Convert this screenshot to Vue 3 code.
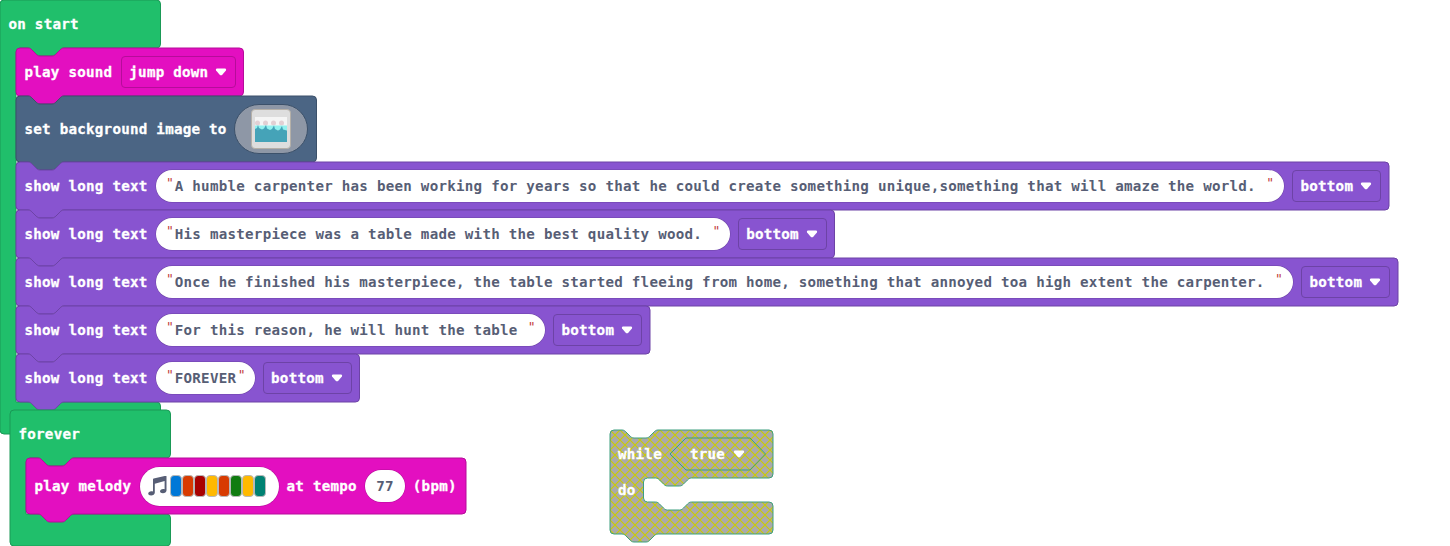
<script setup>
const NOTCH = 'c2 0 3 1 4 2l4 4c1 1 2 2 4 2h12c2 0 3 -1 4 -2l4 -4c1 -1 2 -2 4 -2'
const TAB = 'c-2 0 -3 1 -4 2l-4 4c-1 1 -2 2 -4 2h-12c-2 0 -3 -1 -4 -2l-4 -4c-1 -1 -2 -2 -4 -2'

const statementPath = (w, h) =>
  `M0 4a4 4 0 0 1 4 -4h8${NOTCH}H${w - 4}a4 4 0 0 1 4 4V${h - 4}a4 4 0 0 1 -4 4H48${TAB}H4a4 4 0 0 1 -4 -4z`

const hatPath = (h) =>
  `M0 4a4 4 0 0 1 4 -4H156.5a4 4 0 0 1 4 4V44a4 4 0 0 1 -4 4H64${TAB}H20a4 4 0 0 0 -4 4V${h - 32}H156.5a4 4 0 0 1 4 4V${h - 4}a4 4 0 0 1 -4 4H4a4 4 0 0 1 -4 -4z`

const whilePath =
  `M0 4a4 4 0 0 1 4 -4h8${NOTCH}H159a4 4 0 0 1 4 4V44a4 4 0 0 1 -4 4H81.5${TAB}H37.5a4 4 0 0 0 -4 4V68a4 4 0 0 0 4 4H45.5${NOTCH}H159a4 4 0 0 1 4 4V100a4 4 0 0 1 -4 4H48${TAB}H4a4 4 0 0 1 -4 -4z`

const startBlocks = [
  { kind: 'sound', color: 'magenta', label: 'play sound', w: 227.5, h: 48, option: 'jump down', ow: 115 },
  { kind: 'image', color: 'slate', label: 'set background image to', w: 300.5, h: 66 },
  { kind: 'text', color: 'purple', label: 'show long text', w: 1373, h: 48, fw: 1128, option: 'bottom', ow: 89.5,
    text: 'A humble carpenter has been working for years so that he could create something unique,something that will amaze the world. ' },
  { kind: 'text', color: 'purple', label: 'show long text', w: 818.5, h: 48, fw: 573.7, option: 'bottom', ow: 89.5,
    text: 'His masterpiece was a table made with the best quality wood. ' },
  { kind: 'text', color: 'purple', label: 'show long text', w: 1382, h: 48, fw: 1137, option: 'bottom', ow: 89.5,
    text: 'Once he finished his masterpiece, the table started fleeing from home, something that annoyed toa high extent the carpenter. ' },
  { kind: 'text', color: 'purple', label: 'show long text', w: 634, h: 48, fw: 389, option: 'bottom', ow: 89.5,
    text: 'For this reason, he will hunt the table ' },
  { kind: 'text', color: 'purple', label: 'show long text', w: 343.5, h: 48, fw: 98.6, option: 'bottom', ow: 89.5,
    text: 'FOREVER' }
]

const notes = ['#0078d7', '#d83b01', '#a80000', '#ffb900', '#d83b01', '#107c10', '#ffb900', '#008272']
</script>

<template>
  <main class="workspace">
    <section class="hat start">
      <svg class="shape green" width="162" height="435"><path :d="hatPath(434)" /></svg>
      <header class="label head">on start</header>
      <div class="stack">
        <div
          v-for="(b, i) in startBlocks"
          :key="i"
          class="block"
          :class="b.color"
          :style="{ width: b.w + 'px', height: b.h + 'px', zIndex: i + 1 }"
        >
          <svg class="shape" :class="b.color" :width="b.w + 1" :height="b.h + 9"><path :d="statementPath(b.w, b.h)" /></svg>
          <span class="label">{{ b.label }}</span>
          <span v-if="b.kind === 'text'" class="pill" :style="{ width: b.fw + 'px' }">
            <i class="quote">"</i><span class="value">{{ b.text }}</span><i class="quote end">"</i>
          </span>
          <span v-if="b.kind === 'image'" class="image-pill">
            <svg class="thumb" viewBox="0 0 40 40" width="40" height="40">
              <rect x=".5" y=".5" width="39" height="39" rx="3.5" fill="#dedede" stroke="#b5b0a8" />
              <rect x="4" y="8" width="32" height="24.500" fill="#f5f5f5" />
              <g fill="#e2d0d4"><circle cx="6.500" cy="14" r="2.500" /><circle cx="14.500" cy="14" r="2.500" /><circle cx="22.500" cy="14" r="2.500" /><circle cx="30.500" cy="14" r="2.500" /></g>
              <path d="M4 16.500h32v5H4z" fill="#91f1ef" />
              <path d="M4 20l2-1 1-3 1 3 3 1.500 2-1 2-3.500 1 3.500 3 1.500 2-1 2-3.500 1 3.500 3 1.500 2-1 2-3.500 1 3.500 4 1v11.500H4z" fill="#45a3b8" />
            </svg>
          </span>
          <span v-if="b.option" class="dropdown" :style="{ width: b.ow + 'px' }">
            <span class="label">{{ b.option }}</span>
            <svg class="caret" width="12" height="8" viewBox="0 0 12 8"><path d="M2 .5H10Q11.800 .7 10.900 2.500L7.300 6.700Q6 8 4.700 6.700L1.100 2.500Q.2 .7 2 .5z" /></svg>
          </span>
        </div>
      </div>
    </section>

    <section class="hat forever">
      <svg class="shape green" width="162" height="137"><path :d="hatPath(136)" /></svg>
      <header class="label head">forever</header>
      <div class="stack">
        <div class="block melody">
          <svg class="shape magenta" width="441" height="65"><path :d="statementPath(440, 56)" /></svg>
          <span class="label">play melody</span>
          <span class="melody-pill">
            <svg class="music" width="20" height="20" viewBox="0 0 20 20">
              <path d="M6 3.500Q6 2.800 6.700 2.600L18.500 -.2Q19.500 -.4 19.500 .6V14.500c0 1.600-1.700 2.800-3.600 2.800-1.700 0-2.900-.8-2.900-2s1.300-2.300 3.200-2.300c.6 0 1 .1 1.400.3V5L7.800 7.700v9.100c0 1.600-1.800 2.700-3.700 2.700-1.700 0-2.900-.8-2.900-2S2.500 15.200 4.400 15.200c.6 0 1.100.1 1.600.3z" />
            </svg>
            <span class="notes"><i v-for="(n, i) in notes" :key="i" :style="{ background: n }"></i></span>
          </span>
          <span class="label">at tempo</span>
          <span class="pill number">77</span>
          <span class="label">(bpm)</span>
        </div>
      </div>
    </section>

    <section class="loop">
      <svg class="shape" width="165" height="114">
        <defs>
          <pattern id="hatch" width="10" height="10" patternUnits="userSpaceOnUse">
            <rect width="10" height="10" fill="#aaa" />
            <path d="M-1 -1L11 11M11 -1L-1 11" stroke="#cc0" stroke-width="1.100" />
          </pattern>
        </defs>
        <path class="disabled" :d="whilePath" />
        <path class="disabled" d="M76 8H140L155.500 24L140 40H76L60 24z" />
      </svg>
      <div class="row">
        <span class="label">while</span>
        <span class="label condition"><span>true</span><svg class="caret" width="12" height="8" viewBox="0 0 12 8"><path d="M2 .5H10Q11.800 .7 10.900 2.500L7.300 6.700Q6 8 4.700 6.700L1.100 2.500Q.2 .7 2 .5z" /></svg></span>
      </div>
      <div class="row do"><span class="label">do</span></div>
    </section>
  </main>
</template>

<style>
body { margin: 0; background: #fff; }
</style>

<style scoped>
.workspace {
  position: relative;
  width: 1450px;
  height: 546px;
  overflow: hidden;
  background: #fff;
  color: #fff;
  font: bold 14.2px/20px "DejaVu Sans Mono", monospace;
  letter-spacing: 0.248px;
  white-space: pre;
}
.hat, .loop { position: absolute; }
.start { left: 0; top: 0; }
.forever { left: 10px; top: 410px; }
.loop { left: 610px; top: 430px; }
.shape { position: absolute; left: 0; top: 0; overflow: visible; z-index: -1; }
.hat, .loop, .block { isolation: isolate; }
svg.green { fill: #20bf6b; stroke: #1a9956; }
svg.magenta { fill: #e30fc0; stroke: #b60c9a; }
svg.slate { fill: #4b6584; stroke: #3c516a; }
svg.purple { fill: #8854d0; stroke: #6d43a6; }
.head { height: 48px; line-height: 48px; padding-left: 8.500px; }
.stack { padding-left: 16px; }
.block {
  position: relative;
  display: flex;
  align-items: center;
  gap: 8px;
  box-sizing: border-box;
  padding: 0 8px 0 8.500px;
}
.label { flex: none; -webkit-text-stroke: 0.3px #fff; }
.block > .label { margin-right: 0.4px; }
.pill {
  flex: none;
  display: flex;
  align-items: center;
  box-sizing: border-box;
  height: 32px;
  border-radius: 16px;
  background: #fff;
  color: #575e75;
  box-shadow: 0 0 0 0.5px #6d43a6;
  padding: 0 8px 0 10px;
}
.quote {
  width: 8.8px;
  font: normal 13px/20px "DejaVu Sans Mono", monospace;
  color: #c23b3b;
  transform: translateY(-3px);
}
.quote.end { margin-left: 1.500px; }
.dropdown {
  flex: none;
  display: flex;
  align-items: center;
  justify-content: space-between;
  box-sizing: border-box;
  height: 32px;
  border: 1px solid;
  border-radius: 4px;
  padding: 0 8px 0 7.500px;
}
.magenta .dropdown { border-color: #b60c9a; }
.purple .dropdown { border-color: #6d43a6; }
.caret { fill: #fff; flex: none; }
.image-pill {
  flex: none;
  display: flex;
  align-items: center;
  justify-content: center;
  box-sizing: border-box;
  width: 73.500px;
  height: 50px;
  margin-left: -1px;
  border: 1px solid #3c516a;
  border-radius: 25px;
  background: #8e97a6;
}
.melody { width: 440px; height: 56px; }
.melody-pill {
  flex: none;
  display: flex;
  align-items: center;
  box-sizing: border-box;
  width: 139px;
  height: 39px;
  border-radius: 20px;
  background: #fff;
  box-shadow: 0 0 0 0.5px #b60c9a;
  padding-left: 7px;
}
.music { fill: #575e75; margin-right: 3px; }
.notes { display: flex; }
.notes i { box-sizing: border-box; width: 12px; height: 22px; border: 1px solid #b8b8b8; border-radius: 4px; }
.number { width: 39.500px; padding: 0; justify-content: center; box-shadow: 0 0 0 0.5px #b60c9a; }
.disabled { fill: url(#hatch); stroke: #3c9f7e; }
.row { display: flex; align-items: center; height: 48px; padding-left: 8px; }
.condition { display: flex; align-items: center; gap: 8px; margin-left: 28px; }
.do { height: 24px; }
</style>
